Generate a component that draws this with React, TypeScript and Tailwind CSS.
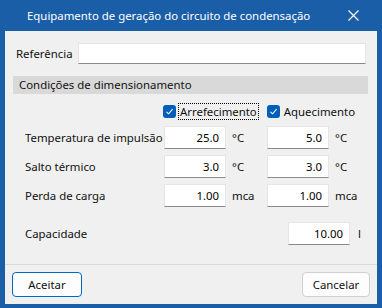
import React from "react";

// ── Small pieces ──────────────────────────────────────────────────────────────

function NumField({ value }: { value: string }) {
  return (
    <div className="h-[23px] w-[62px] bg-white border border-[#e5e5e5] border-b-[#8a8a8a] flex items-center justify-end pr-[6px] text-black">
      {value}
    </div>
  );
}

function Check({ label, focused }: { label: string; focused?: boolean }) {
  return (
    <div className="flex items-center gap-[3px]">
      <span className="w-[13px] h-[13px] rounded-[3px] bg-[#005fb8] flex items-center justify-center">
        <svg width="9" height="9" viewBox="0 0 9 9">
          <path d="M1.5 4.8 L3.6 6.8 L7.6 2.2" stroke="white" strokeWidth="1.1" fill="none" />
        </svg>
      </span>
      <span
        className={
          "px-[1px] leading-[15px] " +
          (focused ? "outline-1 outline-dotted outline-black" : "")
        }
      >
        {label}
      </span>
    </div>
  );
}

const rows = [
  { label: "Temperatura de impulsão", a: "25.0", b: "5.0", unit: "°C" },
  { label: "Salto térmico", a: "3.0", b: "3.0", unit: "°C" },
  { label: "Perda de carga", a: "1.00", b: "1.00", unit: "mca" },
];

// ── Dialog ────────────────────────────────────────────────────────────────────

export default function App() {
  return (
    <div
      className="w-[382px] h-[308px] bg-[#1b5ea8] flex flex-col text-[11.4px] text-[#111] whitespace-nowrap"
      style={{ fontFamily: '"Noto Sans", "Open Sans", sans-serif' }}
    >
      {/* Title bar */}
      <div className="h-[31px] flex items-center justify-between pl-[27px] pr-[23px] text-white">
        <span>Equipamento de geração do circuito de condensação</span>
        <svg width="11" height="11" viewBox="0 0 11 11">
          <path d="M0.5 0.5 L10.5 10.5 M10.5 0.5 L0.5 10.5" stroke="white" strokeWidth="1.2" />
        </svg>
      </div>

      {/* Body */}
      <div className="mx-[5px] mb-[4px] flex-1 bg-[#f0f0f0] flex flex-col">
        <div className="flex-1 flex flex-col">
          {/* Referência */}
          <div className="flex items-center mt-[12px] pl-[11px]">
            <span className="w-[62px]">Referência</span>
            <div className="h-[21px] w-[288px] bg-white border border-[#e5e5e5] border-b-[#8a8a8a]" />
          </div>

          {/* Section header */}
          <div className="mt-[12px] ml-[8px] mr-[9px] h-[18px] bg-[#d9d9d9] flex items-center pl-[6px]">
            Condições de dimensionamento
          </div>

          {/* Checkboxes */}
          <div className="mt-[10px] flex items-center pl-[158px] gap-[9px]">
            <Check label="Arrefecimento" focused />
            <Check label="Aquecimento" />
          </div>

          {/* Value rows */}
          <div className="mt-[7px] flex flex-col gap-[6px] pl-[20px]">
            {rows.map((r) => (
              <div key={r.label} className="flex items-center">
                <span className="w-[139px]">{r.label}</span>
                <NumField value={r.a} />
                <span className="w-[41px] pl-[6px]">{r.unit}</span>
                <NumField value={r.b} />
                <span className="pl-[6px]">{r.unit}</span>
              </div>
            ))}
          </div>

          {/* Capacidade */}
          <div className="mt-[15px] flex items-center pl-[20px]">
            <span className="w-[263px]">Capacidade</span>
            <NumField value="10.00" />
            <span className="pl-[8px]">l</span>
          </div>
        </div>

        {/* Footer */}
        <div className="h-[40px] border-t border-[#d9d9d9] flex items-center justify-between px-[7px]">
          <button
            type="button"
            className="h-[25px] w-[70px] rounded-[4px] bg-[#fdfdfd] border border-[#0067c0]"
          >
            Aceitar
          </button>
          <button
            type="button"
            className="h-[25px] w-[68px] rounded-[4px] bg-[#fdfdfd] border border-[#d0d0d0]"
          >
            Cancelar
          </button>
        </div>
      </div>
    </div>
  );
}
